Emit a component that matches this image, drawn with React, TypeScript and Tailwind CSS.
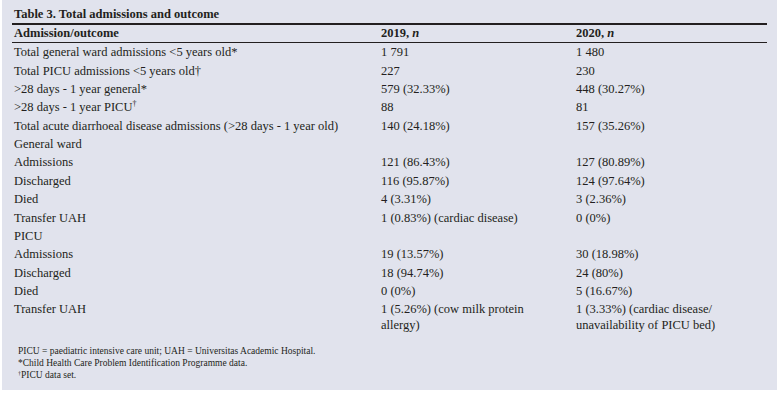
const rows: { label: string; a?: string; b?: string; sup?: string }[] = [
  { label: 'Total general ward admissions <5 years old*', a: '1 791', b: '1 480' },
  { label: 'Total PICU admissions <5 years old†', a: '227', b: '230' },
  { label: '>28 days - 1 year general*', a: '579 (32.33%)', b: '448 (30.27%)' },
  { label: '>28 days - 1 year PICU', sup: '†', a: '88', b: '81' },
  { label: 'Total acute diarrhoeal disease admissions (>28 days - 1 year old)', a: '140 (24.18%)', b: '157 (35.26%)' },
  { label: 'General ward' },
  { label: 'Admissions', a: '121 (86.43%)', b: '127 (80.89%)' },
  { label: 'Discharged', a: '116 (95.87%)', b: '124 (97.64%)' },
  { label: 'Died', a: '4 (3.31%)', b: '3 (2.36%)' },
  { label: 'Transfer UAH', a: '1 (0.83%) (cardiac disease)', b: '0 (0%)' },
  { label: 'PICU' },
  { label: 'Admissions', a: '19 (13.57%)', b: '30 (18.98%)' },
  { label: 'Discharged', a: '18 (94.74%)', b: '24 (80%)' },
  { label: 'Died', a: '0 (0%)', b: '5 (16.67%)' },
  { label: 'Transfer UAH', a: '1 (5.26%) (cow milk protein allergy)', b: '1 (3.33%) (cardiac disease/ unavailability of PICU bed)' },
];

export default function App() {
  return (
    <div className="bg-white w-[781px] h-[400px] pl-[2px]">
      <div
        className="w-[775px] h-[390px] bg-[#e1e3ed] px-[10px] text-[#231f20]"
        style={{ fontFamily: '"Liberation Serif", "Times New Roman", serif' }}
      >
        <div className="pt-[6px] pb-[1px] pl-[2px] text-[12.5px] font-bold leading-[16px]">
          Table 3. Total admissions and outcome
        </div>
        <div className="border-t-2 border-b border-[#231f20] grid grid-cols-[369px_195px_1fr] text-[12.5px] font-bold leading-[16px] pt-[0px] pb-[1px]">
          <div className="pl-[2px]">Admission/outcome</div>
          <div>2019, <i>n</i></div>
          <div>2020, <i>n</i></div>
        </div>
        <div>
          {rows.map((r, i) => (
            <div
              key={i}
              className="grid grid-cols-[369px_195px_1fr] text-[12.5px] leading-[16px] py-[1.2px]"
            >
              <div className="pl-[2px]">
                {r.label}
                {r.sup && <span className="text-[8px] align-top leading-[10px]">{r.sup}</span>}
              </div>
              <div className="pr-[20px]">{r.a}</div>
              <div className="pr-[30px]">{r.b}</div>
            </div>
          ))}
        </div>
        <div className="mt-[10px] pl-[6px] text-[9.5px] leading-[12px]">
          <div>PICU = paediatric intensive care unit; UAH = Universitas Academic Hospital.</div>
          <div>*Child Health Care Problem Identification Programme data.</div>
          <div>
            <span className="text-[6px] align-top leading-[8px]">†</span>PICU data set.
          </div>
        </div>
      </div>
    </div>
  );
}
